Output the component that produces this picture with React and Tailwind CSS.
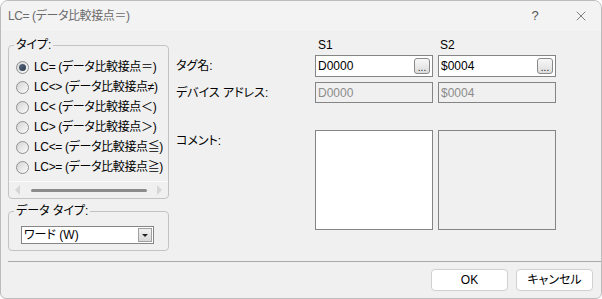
import React from "react";
import { X } from "lucide-react";

const types = [
  "LC= (データ比較接点＝)",
  "LC<> (データ比較接点≠)",
  "LC< (データ比較接点＜)",
  "LC> (データ比較接点＞)",
  "LC<= (データ比較接点≦)",
  "LC>= (データ比較接点≧)",
];

const Radio = ({ checked, label }) => (
  <div className="h-[20px] flex items-center">
    <span className="shrink-0 ml-[7px] w-[13px] h-[13px] rounded-full border border-[#8e8f8f] bg-gradient-to-br from-[#d4d4d4] to-[#fbfbfb] flex items-center justify-center">
      {checked && (
        <span className="w-[7px] h-[7px] rounded-full bg-gradient-to-br from-[#5a6a80] to-[#2c3a4e]" />
      )}
    </span>
    <span className="ml-[5px] whitespace-nowrap tracking-[-0.35px]">{label}</span>
  </div>
);

const Browse = () => (
  <span className="w-[16px] h-[16px] mr-[2px] border border-[#8a8a8a] rounded-[3px] bg-gradient-to-b from-[#f8f8f8] to-[#dcdcdc] flex items-end justify-center text-[10px] leading-[11px] text-[#222]">
    ...
  </span>
);

const Field = ({ value, disabled, browse }) => (
  <div
    className={`h-full border border-[#858585] flex items-center justify-between pl-[2px] ${
      disabled ? "bg-[#f0f0f0] text-[#8c8c8c]" : "bg-white text-black"
    }`}
  >
    <span>{value}</span>
    {browse && <Browse />}
  </div>
);

const App = () => {
  return (
    <div className="w-[602px] h-[299px] bg-[#f0f0f0] border border-[#bcbcbc] rounded-t-lg rounded-b-md overflow-hidden flex flex-col text-[12px] leading-[16px] text-black [font-feature-settings:'palt'] font-['Liberation_Sans','Noto_Sans_CJK_JP',sans-serif]">
      {/* Title bar */}
      <div className="h-[30px] shrink-0 bg-[#f3f3f3] flex items-center justify-between pl-[7px]">
        <span className="text-[#6b6b6b] text-[12px] tracking-[-0.4px]">LC= (データ比較接点＝)</span>
        <div className="flex items-center">
          <span className="w-[20px] mr-[16px] text-center text-[#555] text-[13px]">?</span>
          <span className="w-[40px] flex justify-center">
            <X size={16} strokeWidth={1} color="#444" />
          </span>
        </div>
      </div>

      {/* Body */}
      <div className="h-[230px] shrink-0 flex pl-[7px]">
        {/* Left column */}
        <div className="w-[161px] shrink-0 flex flex-col">
          <fieldset className="min-w-0 mt-[6px] border border-[#c3c3c3] rounded-[4px]">
            <legend className="ml-[5px] px-[2px] leading-[16px]">タイプ:</legend>
            <div className="pt-[4px]">
              {types.map((t, i) => (
                <Radio key={t} label={t} checked={i === 0} />
              ))}
            </div>
            <div className="mt-[4px] h-px bg-[#fbfbfb]" />
            <div className="h-[16px] flex items-center justify-between px-[6px]">
              <span className="w-0 h-0 border-y-[5px] border-y-transparent border-r-[5px] border-r-[#d6d6d6]" />
              <span className="w-[116px] h-[3px] rounded-full bg-[#8c8c8c]" />
              <span className="w-0 h-0 border-y-[5px] border-y-transparent border-l-[5px] border-l-[#d6d6d6]" />
            </div>
          </fieldset>

          <fieldset className="min-w-0 mt-[4px] border border-[#c3c3c3] rounded-[4px] pb-[6px]">
            <legend className="ml-[5px] px-[2px] leading-[16px]">データ タイプ:</legend>
            <div className="pt-[7px] pl-[12px]">
              <div className="w-[133px] h-[18px] bg-white border border-[#858585] flex items-center justify-between pl-[2px]">
                <span>ワード (W)</span>
                <span className="w-[14px] h-[14px] mr-px bg-gradient-to-b from-[#f0f0f0] to-[#d8d8d8] border border-[#a0a0a0] flex items-center justify-center">
                  <span className="w-0 h-0 border-x-[3px] border-x-transparent border-t-[3px] border-t-[#222]" />
                </span>
              </div>
            </div>
          </fieldset>
        </div>

        {/* Right column */}
        <div className="ml-[7px] pt-[7px] grid grid-cols-[134px_118px_118px] gap-x-[5px] content-start">
          <div className="h-[14px]" />
          <div className="h-[14px] leading-[14px] pl-[3px]">S1</div>
          <div className="h-[14px] leading-[14px] pl-[2px]">S2</div>

          <div className="mt-[3px] h-[22px] flex items-center">タグ名:</div>
          <div className="mt-[3px] h-[22px]">
            <Field value="D0000" browse />
          </div>
          <div className="mt-[3px] h-[22px]">
            <Field value="$0004" browse />
          </div>

          <div className="mt-[5px] h-[21px] flex items-center">デバイス アドレス:</div>
          <div className="mt-[5px] h-[21px]">
            <Field value="D0000" disabled />
          </div>
          <div className="mt-[5px] h-[21px]">
            <Field value="$0004" disabled />
          </div>

          <div className="mt-[27px] pt-[3px]">コメント:</div>
          <div className="mt-[27px] h-[100px] bg-white border border-[#858585]" />
          <div className="mt-[27px] h-[100px] bg-[#f0f0f0] border border-[#858585]" />
        </div>
      </div>

      {/* Separator */}
      <div className="ml-[7px] h-px bg-[#a9a9a9] shrink-0" />

      {/* Footer */}
      <div className="flex justify-end gap-[8px] pt-[7px] pr-[8px]">
        <button className="w-[77px] h-[22px] bg-white border border-[#d0d0d0] rounded-[4px] text-[12px]">
          OK
        </button>
        <button className="w-[77px] h-[22px] bg-white border border-[#d0d0d0] rounded-[4px] text-[12px]">
          キャンセル
        </button>
      </div>
    </div>
  );
};

export default App;
